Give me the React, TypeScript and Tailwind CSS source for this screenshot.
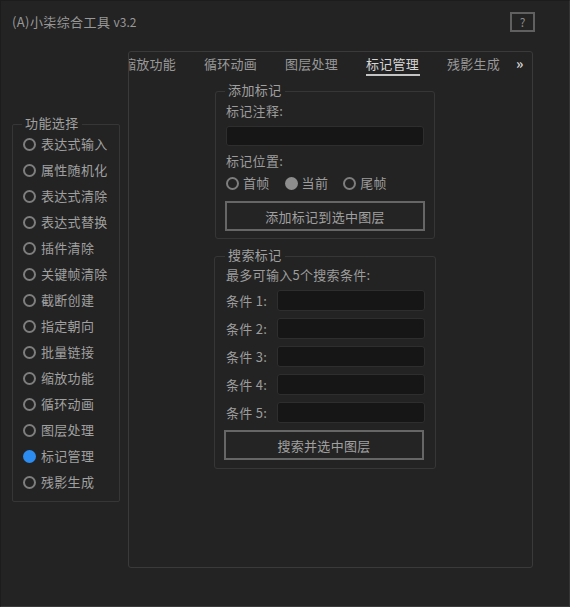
import { useState } from 'react'

const features = [
  '表达式输入',
  '属性随机化',
  '表达式清除',
  '表达式替换',
  '插件清除',
  '关键帧清除',
  '截断创建',
  '指定朝向',
  '批量链接',
  '缩放功能',
  '循环动画',
  '图层处理',
  '标记管理',
  '残影生成',
]

const tabs = ['缩放功能', '循环动画', '图层处理', '标记管理', '残影生成']

function Radio({ checked, color = 'blue' }: { checked: boolean; color?: 'blue' | 'gray' }) {
  if (checked) {
    return (
      <span
        className={`w-[13px] h-[13px] rounded-full shrink-0 ${
          color === 'blue' ? 'bg-[#2d8cf0]' : 'bg-[#8e8e8e]'
        }`}
      />
    )
  }
  return <span className="w-[13px] h-[13px] rounded-full border-2 border-[#7e7e7e] shrink-0" />
}

function Legend({ children, left }: { children: React.ReactNode; left: string }) {
  return (
    <span
      className={`absolute -top-[11px] ${left} px-[3px] bg-[#232323] text-[13px] leading-[18px] text-[#a0a0a0] tracking-[0.4px]`}
    >
      {children}
    </span>
  )
}

export default function App() {
  const [selected, setSelected] = useState('标记管理')
  const [pos, setPos] = useState('当前')
  const activeTab = '标记管理'

  return (
    <div
      className="w-[570px] h-[607px] bg-[#232323] border-t border-l border-[#1c1c1c] border-r border-b border-r-[#343434] border-b-[#3a3a3a] overflow-hidden text-[#9c9c9c] text-[13px]"
      style={{ fontFamily: '"Noto Sans CJK SC", "Noto Sans", sans-serif' }}
    >
      {/* Header */}
      <div className="flex items-start justify-between pt-[11px] pl-[11px] pr-[34px]">
        <div className="h-[20px] leading-[20px] text-[13px] text-[#989898] tracking-[0.4px]">
          (A)小柒综合工具 <span className="text-[12px] tracking-normal">v3.2</span>
        </div>
        <button className="w-[25px] h-[20px] border-2 border-[#606060] flex items-center justify-center text-[12px] text-[#8a8a8a] leading-none">
          ?
        </button>
      </div>

      {/* Body */}
      <div className="flex items-start pl-[11px] mt-[19px]">
        {/* Feature list */}
        <div className="relative w-[108px] mt-[73px] border border-[#363636] rounded-[2px] pt-[6px] pb-[6px] pl-[10px]">
          <Legend left="left-[9px]">功能选择</Legend>
          {features.map((f) => (
            <div
              key={f}
              onClick={() => setSelected(f)}
              className="h-[26px] flex items-center gap-[5px] cursor-pointer"
            >
              <Radio checked={selected === f} />
              <span className="leading-[18px] text-[#a0a0a0] tracking-[0.3px]">{f}</span>
            </div>
          ))}
        </div>

        {/* Tab panel */}
        <div className="ml-[8px] w-[405px] h-[517px] border border-[#3a3a3a] rounded-[3px] flex flex-col">
          {/* Tabs */}
          <div className="flex h-[24px]">
            <div className="flex-1 overflow-hidden">
              <div className="flex -ml-[20px]">
                {tabs.map((t) => (
                  <div key={t} className="w-[81px] shrink-0 flex flex-col items-center pt-[3px]">
                    <span
                      className={`leading-[18px] tracking-[0.3px] ${
                        t === activeTab ? 'text-[#d6d6d6]' : 'text-[#989898]'
                      }`}
                    >
                      {t}
                    </span>
                    {t === activeTab && <span className="mt-[1px] w-[54px] h-[2px] bg-[#c4c4c4]" />}
                  </div>
                ))}
              </div>
            </div>
            <div className="w-[12px] mr-[4px] pt-[2px] text-[14px] font-bold text-[#d4d4d4] leading-[18px]">»</div>
          </div>

          {/* Add marker */}
          <div className="relative ml-[86px] mt-[15px] w-[220px] border border-[#363636] rounded-[3px] px-[10px] pt-[10px] pb-[7px]">
            <Legend left="left-[9px]">添加标记</Legend>
            <div className="leading-[18px] tracking-[0.3px]">标记注释:</div>
            <input className="mt-[6px] block w-[198px] h-[20px] bg-[#161616] border border-[#2e2e2e] rounded-[3px] outline-none text-[#cccccc] px-1" />
            <div className="mt-[6px] leading-[18px] tracking-[0.3px]">标记位置:</div>
            <div className="mt-[4px] h-[18px] flex items-center gap-[15px]">
              {['首帧', '当前', '尾帧'].map((p) => (
                <div key={p} onClick={() => setPos(p)} className="flex items-center gap-[4px] cursor-pointer">
                  <Radio checked={pos === p} color="gray" />
                  <span className="leading-[18px] tracking-[0.3px]">{p}</span>
                </div>
              ))}
            </div>
            <button className="mt-[9px] -ml-[1px] w-[200px] h-[30px] border-2 border-[#666666] bg-[#242424] text-[#a0a0a0] leading-none tracking-[0.3px]">
              添加标记到选中图层
            </button>
          </div>

          {/* Search marker */}
          <div className="relative ml-[85px] mt-[17px] w-[222px] border border-[#363636] rounded-[3px] pl-[11px] pr-[10px] pt-[9px] pb-[8px]">
            <Legend left="left-[10px]">搜索标记</Legend>
            <div className="leading-[18px] tracking-[0.3px]">最多可输入5个搜索条件:</div>
            <div className="mt-[6px] flex flex-col gap-[7px]">
              {[1, 2, 3, 4, 5].map((n) => (
                <div key={n} className="flex items-center justify-between">
                  <span className="leading-[18px] tracking-[0.3px]">条件 {n}:</span>
                  <input className="w-[148px] h-[21px] bg-[#161616] border border-[#2e2e2e] rounded-[3px] outline-none text-[#cccccc] px-1" />
                </div>
              ))}
            </div>
            <button className="mt-[7px] -ml-[2px] w-[200px] h-[30px] border-2 border-[#666666] bg-[#242424] text-[#a0a0a0] leading-none tracking-[0.3px]">
              搜索并选中图层
            </button>
          </div>
        </div>
      </div>
    </div>
  )
}
